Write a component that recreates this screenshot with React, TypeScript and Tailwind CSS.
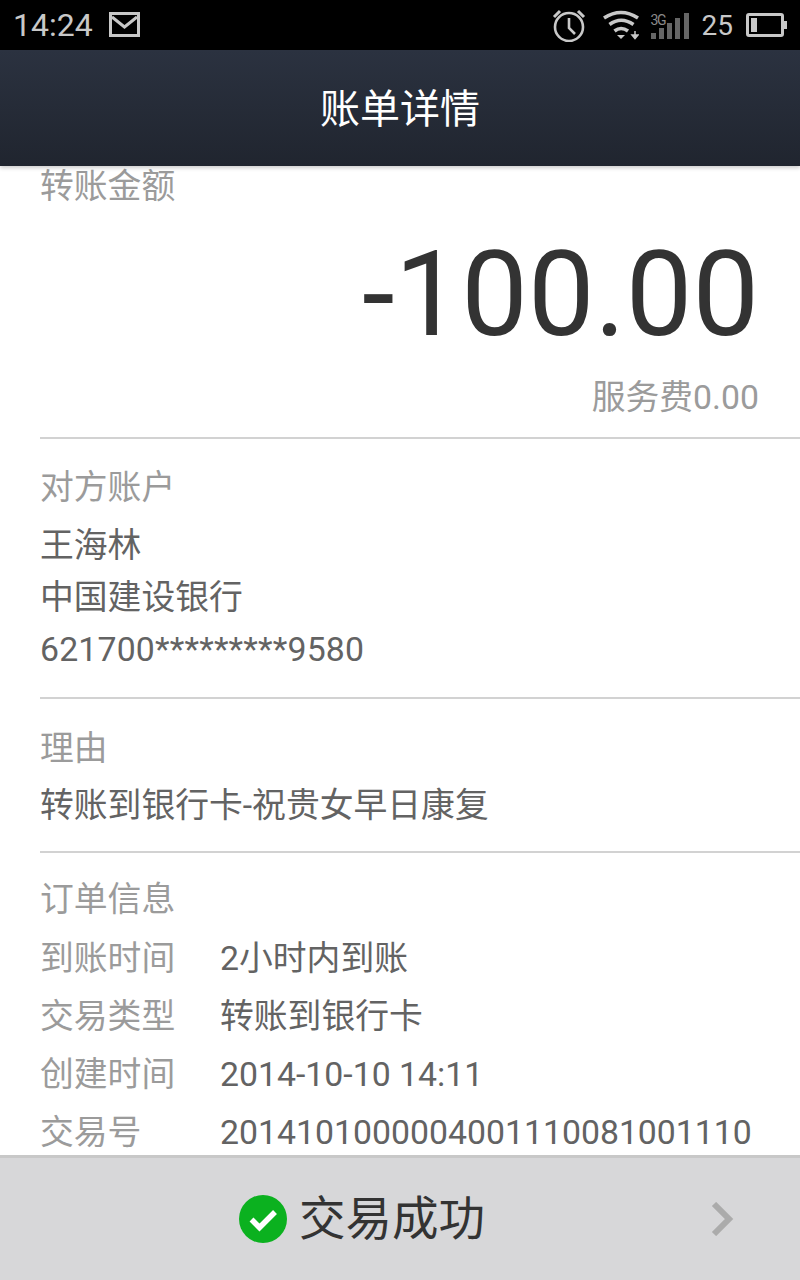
const fontStack = "font-['Roboto','Noto_Sans_CJK_SC',sans-serif]"

const orderRows = [
  { label: "到账时间", value: "2小时内到账" },
  { label: "交易类型", value: "转账到银行卡" },
  { label: "创建时间", value: "2014-10-10 14:11" },
  { label: "交易号", value: "2014101000004001110081001110" },
]

function StatusBar() {
  return (
    <div className="flex h-[50px] shrink-0 items-center justify-between bg-black pl-[13px] pr-[13px] text-[#c8c8c8]">
      <div className="flex items-center gap-[16px]">
        <span className="text-[32px] leading-none">14:24</span>
        <svg width="32" height="26" viewBox="0 0 32 26" fill="none" stroke="#c8c8c8" strokeWidth="3">
          <rect x="1.5" y="1.5" width="28" height="22" />
          <path d="M3 5l12.5 10L28 5" />
        </svg>
      </div>
      <div className="flex items-center">
        <svg width="36" height="34" viewBox="0 0 36 34" fill="none" stroke="#c8c8c8" strokeWidth="2.6">
          <circle cx="18" cy="19" r="14" />
          <path d="M18 10v10l6 6" />
          <path d="M3 9l6-6M33 9l-6-6" strokeWidth="3" />
        </svg>
        <svg className="ml-[16px]" width="36" height="30" viewBox="0 0 36 30" fill="none" stroke="#c8c8c8" strokeWidth="3.6">
          <path d="M1 8Q18-3 35 8" />
          <path d="M6.500 14.500Q18 6 30.500 14.500" />
          <path d="M11.500 21Q18 16 25 21" />
          <path d="M14 25h8l-4 4z" fill="#c8c8c8" stroke="none" />
          <path d="M32 21v4M29 25h6l-3 3.500z" fill="#c8c8c8" strokeWidth="1.500" />
        </svg>
        <div className="relative ml-[12px] h-[28px] w-[38px]">
          <svg className="absolute inset-0" width="38" height="28" viewBox="0 0 38 28" fill="#666666">
            <rect x="0" y="22" width="5" height="6" />
            <rect x="8" y="17" width="5" height="11" />
            <rect x="16" y="12" width="5" height="16" />
            <rect x="24" y="7" width="5" height="21" />
            <rect x="33" y="2" width="5" height="26" />
          </svg>
          <span className="absolute left-0 top-[3px] text-[14px] leading-[12px] tracking-[-1.5px] text-[#8a8a8a]">3G</span>
        </div>
        <span className="ml-[13px] pt-[2px] text-[28px] leading-none">25</span>
        <svg className="ml-[13px]" width="41" height="24" viewBox="0 0 41 24" fill="none" stroke="#c8c8c8" strokeWidth="3">
          <rect x="1.500" y="1.500" width="35" height="21" rx="1.500" />
          <rect x="5" y="5" width="6" height="14" fill="#c8c8c8" stroke="none" />
          <rect x="38" y="8" width="3" height="8" fill="#c8c8c8" stroke="none" />
        </svg>
      </div>
    </div>
  )
}

function Label({ children }: { children: string }) {
  return <div className="text-[33.800px] leading-[40px] text-[#9b9b9b]">{children}</div>
}

function Line({ children }: { children: string }) {
  return <div className="text-[33.800px] leading-[52px] text-[#636363]">{children}</div>
}

export default function App() {
  return (
    <div className={`flex h-[1280px] w-[800px] flex-col overflow-hidden bg-white ${fontStack}`}>
      <StatusBar />
      <header className="z-10 flex h-[116px] shrink-0 items-center justify-center bg-gradient-to-b from-[#2b3240] to-[#20252f] pt-[3px] shadow-[0_2px_4px_rgba(0,0,0,0.2)]">
        <h1 className="text-[40px] font-normal text-white">账单详情</h1>
      </header>

      <main className="min-h-0 flex-1 overflow-hidden pl-[40px]">
        <section className="h-[273px] border-b-2 border-[#d2d2d2] pr-[41px] pt-[1px]">
          <Label>转账金额</Label>
          <div className="mt-[18px] text-right text-[118.500px] leading-[140px] text-[#333333]">-100.00</div>
          <div className="mt-[13px] text-right text-[33.800px] leading-[40px] text-[#9b9b9b]">服务费0.00</div>
        </section>

        <section className="h-[260px] border-b-2 border-[#d2d2d2] pt-[29px]">
          <Label>对方账户</Label>
          <div className="mt-[12px]">
            <Line>王海林</Line>
            <Line>中国建设银行</Line>
            <div className="text-[33.800px] leading-[52px] tracking-[0.17px] text-[#636363]">621700*********9580</div>
          </div>
        </section>

        <section className="h-[154px] border-b-2 border-[#d2d2d2] pt-[30px]">
          <Label>理由</Label>
          <div className="mt-[11px]">
            <Line>转账到银行卡-祝贵女早日康复</Line>
          </div>
        </section>

        <section className="pt-[27px]">
          <Label>订单信息</Label>
          <div className="mt-[10px] flex flex-col">
            {orderRows.map((row) => (
              <div key={row.label} className="flex h-[58px] items-center">
                <div className="w-[180px] shrink-0 text-[33.800px] text-[#9b9b9b]">{row.label}</div>
                <div className="whitespace-nowrap text-[33.800px] text-[#636363]">{row.value}</div>
              </div>
            ))}
          </div>
        </section>
      </main>

      <footer className="relative flex h-[125px] shrink-0 items-center border-t-[3px] border-[#c8c8c8] bg-[#d7d7d9] pl-[239px]">
        <div className="flex items-center gap-[12px]">
          <svg width="48" height="48" viewBox="0 0 48 48">
            <circle cx="24" cy="24" r="24" fill="#0bb11f" />
            <path d="M12.500 24.500l8 8L36 17" fill="none" stroke="white" strokeWidth="5.500" />
          </svg>
          <span className="text-[46.500px] leading-none text-[#333333]">交易成功</span>
        </div>
        <svg className="absolute left-[711px] top-[44px]" width="24" height="34" viewBox="0 0 24 34" fill="none" stroke="#ababab" strokeWidth="6">
          <path d="M3 2l15 15L3 32" />
        </svg>
      </footer>
    </div>
  )
}
